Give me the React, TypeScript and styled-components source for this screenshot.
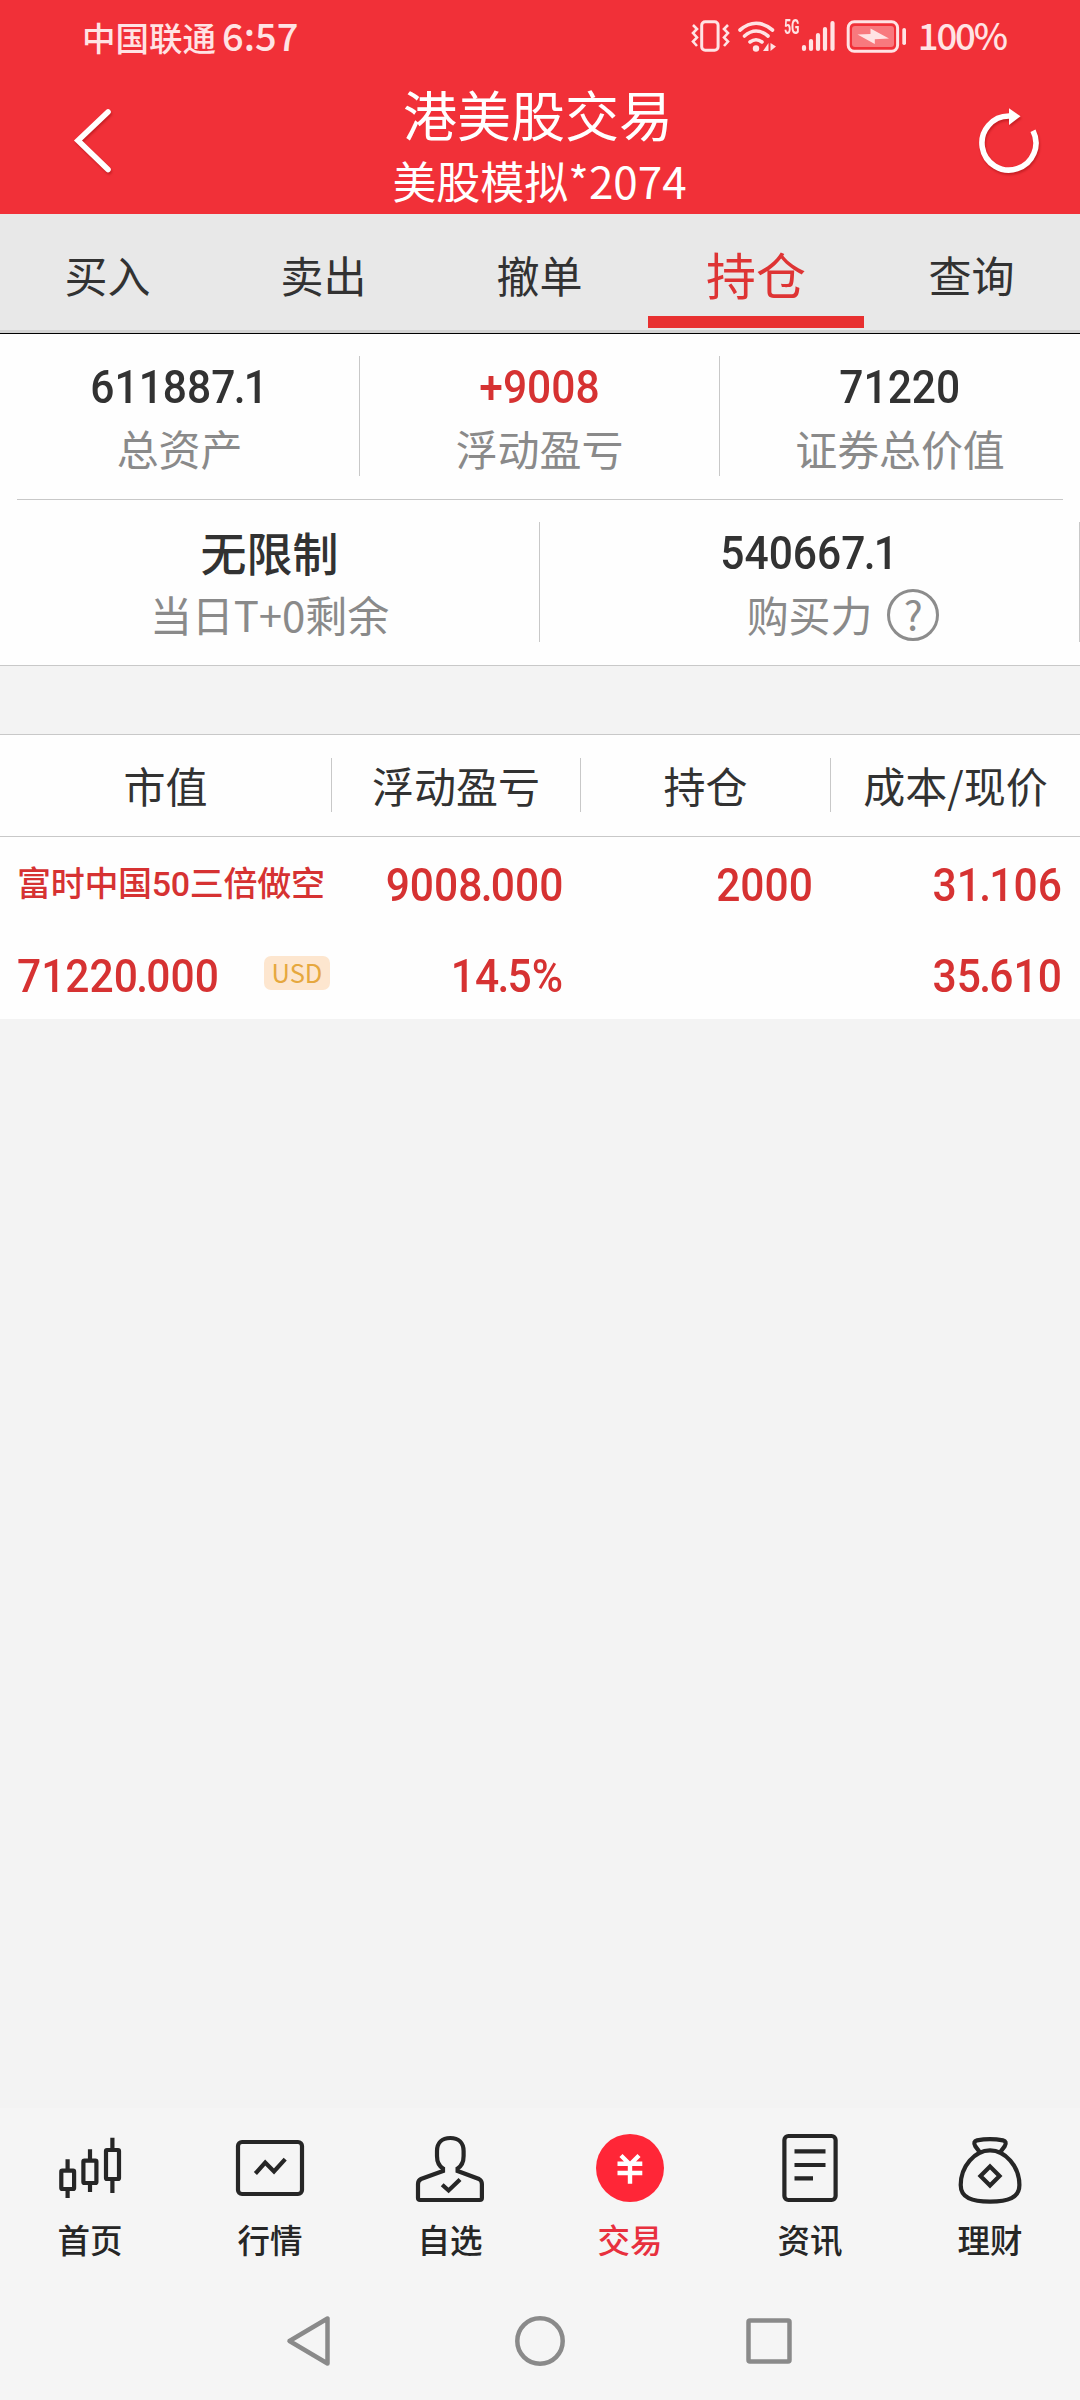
import React from "react";
import styled, { createGlobalStyle } from "styled-components";

const cjk = `"Noto Sans CJK SC", sans-serif`;
const din = `Roboto, "Noto Sans CJK SC", sans-serif`;
const RED = "#d63232";
const INK = "#323232";
const LINE = "#c8c8c8";

const GlobalStyle = createGlobalStyle`
  * { box-sizing: border-box; }
  body { margin: 0; background: #f3f3f3; }
`;

const Screen = styled.div`
  width: 1080px;
  height: 2400px;
  display: flex;
  flex-direction: column;
  background: #f3f3f3;
  font-family: ${cjk};
  color: ${INK};
  white-space: nowrap;
  overflow: hidden;
`;

/* ---------- header ---------- */
const Header = styled.header`
  height: 214px;
  background: #f13038;
  color: #fff;
  display: flex;
  flex-direction: column;
`;

const StatusBar = styled.div`
  height: 74px;
  padding: 0 74px 2px 82px;
  display: flex;
  justify-content: space-between;
  align-items: center;
  color: #ffe3e4;
`;

const StatusLeft = styled.div`
  display: flex;
  align-items: baseline;
  gap: 6px;
  line-height: 50px;
`;

const Carrier = styled.span`
  font-size: 33.5px;
  font-weight: 500;
`;

const Clock = styled.span`
  font-size: 38px;
  font-weight: 500;
`;

const StatusRight = styled.div`
  display: flex;
  align-items: center;
`;

const StatusIcon = styled.svg<{ $gap: number }>`
  display: block;
  height: 36px;
  margin-right: ${(p) => p.$gap}px;
`;

const NetworkType = styled.span`
  width: 16px;
  height: 36px;
  margin-right: 1px;
  font: 700 20px/18px ${din};
  transform: scaleX(0.62);
  transform-origin: left;
`;

const BatteryText = styled.span`
  font-size: 36.5px;
  line-height: 50px;
  padding-bottom: 2px;
  letter-spacing: -2.1px;
  font-weight: 500;
`;

const TitleBar = styled.div`
  height: 140px;
  display: grid;
  grid-template-columns: 140px 1fr 140px;
`;

const Titles = styled.div`
  display: flex;
  flex-direction: column;
  align-items: center;
  padding: 4px 1px 0 0;
`;

const Title = styled.h1`
  margin: 0;
  font-size: 54px;
  font-weight: 400;
  line-height: 72px;
  padding-right: 3px;
`;

const Subtitle = styled.div`
  font-size: 44px;
  line-height: 60px;
`;

const BarIcon = styled.svg`
  display: block;
  width: 140px;
  height: 140px;
  filter: drop-shadow(1px 2px 1px rgba(120, 0, 0, 0.35));
`;

/* ---------- tabs ---------- */
const Tabs = styled.nav`
  height: 120px;
  display: grid;
  grid-template-columns: repeat(5, 1fr);
  background: #e8e8e8;
  border-bottom: 1px solid #000;
  box-shadow: inset 0 -3px 0 #d2d2d2;
`;

const Tab = styled.div<{ $active?: boolean }>`
  height: 114px;
  display: flex;
  justify-content: center;
  align-items: center;
  padding-top: ${(p) => (p.$active ? 16 : 5)}px;
  padding-right: ${(p) => (p.$active ? 0 : 1)}px;
  border-bottom: ${(p) => (p.$active ? "12px solid #e83030" : "0")};
  color: ${(p) => (p.$active ? "#de3434" : INK)};
  font-size: ${(p) => (p.$active ? 50 : 43)}px;
  line-height: 60px;
`;

/* ---------- account figures ---------- */
const Summary = styled.section`
  background: #fefefe;
  border-bottom: 1px solid ${LINE};
`;

const StatRow = styled.div<{ $cols: number }>`
  height: 165px;
  padding: 22px 0 23px;
  display: grid;
  grid-template-columns: repeat(${(p) => p.$cols}, 1fr);
`;

const Rule = styled.div`
  height: 1px;
  margin: 0 17px;
  background: ${LINE};
`;

const Stat = styled.div<{ $divided?: boolean }>`
  height: 120px;
  display: flex;
  flex-direction: column;
  align-items: center;
  border-right: ${(p) => (p.$divided ? `1px solid ${LINE}` : "0")};
`;

const Figure = styled.span<{ $origin: string; $red?: boolean }>`
  display: block;
  font-family: ${din};
  font-size: 47px;
  font-weight: 500;
  line-height: 62px;
  color: ${(p) => (p.$red ? RED : INK)};
  transform: scaleX(0.905);
  transform-origin: ${(p) => p.$origin};
`;

const Point = styled.span`
  margin: 0 -0.04em;
`;

const TextValue = styled.span`
  font-size: 46px;
  font-weight: 500;
  line-height: 58px;
  padding-bottom: 4px;
`;

const Label = styled.span`
  font-size: 42px;
  line-height: 58px;
  padding-top: 1px;
  letter-spacing: -0.1px;
  color: #8a8a8a;
`;

const HelpLabel = styled.div`
  width: 100%;
  display: grid;
  grid-template-columns: 1fr auto 1fr;
  align-items: start;
`;

const Help = styled.span`
  grid-column: 3;
  width: 52px;
  height: 52px;
  margin: 5px 0 0 15px;
  border: 3px solid #8c8c8c;
  border-radius: 50%;
  color: #8c8c8c;
  font-size: 40px;
  line-height: 42px;
  text-align: center;
`;

const HelpText = styled(Label)`
  grid-column: 2;
`;

/* ---------- holdings ---------- */
const Holdings = styled.section`
  margin-top: 68px;
  background: #fefefe;
  border-top: 1px solid ${LINE};
`;

const columns = "332px 249px 250px 249px";

const HeadRow = styled.div`
  height: 102px;
  padding: 23px 0 24px;
  display: grid;
  grid-template-columns: ${columns};
  border-bottom: 1px solid ${LINE};
`;

const HeadCell = styled.div`
  height: 54px;
  font-size: 42px;
  line-height: 54px;
  text-align: center;
  border-right: 1px solid ${LINE};
  &:last-child {
    border-right: 0;
  }
`;

const HoldingRow = styled.div`
  height: 182px;
  padding-top: 4px;
  display: grid;
  grid-template-columns: ${columns};
`;

const HoldingCell = styled.div<{ $first?: boolean }>`
  display: flex;
  flex-direction: column;
  gap: 3px;
  padding: ${(p) => (p.$first ? "0 0 0 17px" : "0 18px 0 0")};
  align-items: ${(p) => (p.$first ? "stretch" : "flex-end")};
`;

const HoldingLine = styled.div`
  height: 88px;
  display: flex;
  align-items: center;
  justify-content: space-between;
`;

const StockName = styled.span`
  font-family: ${din};
  font-size: 34px;
  font-weight: 500;
  line-height: 46px;
  padding-bottom: 3px;
  letter-spacing: -0.3px;
  color: ${RED};
`;

const Currency = styled.span`
  width: 66px;
  height: 34px;
  margin: 0 2px 6px 0;
  border-radius: 7px;
  background: #fde6cf;
  color: #e6a83e;
  font-size: 25.5px;
  line-height: 31px;
  text-align: center;
`;

/* ---------- bottom bars ---------- */
const BottomNav = styled.nav`
  height: 174px;
  margin-top: auto;
  padding-top: 20px;
  display: grid;
  grid-template-columns: repeat(6, 1fr);
  background: #f5f5f5;
`;

const NavItem = styled.div<{ $active?: boolean }>`
  display: flex;
  flex-direction: column;
  align-items: center;
  gap: 11px;
  color: ${(p) => (p.$active ? "#e8303e" : "#262626")};
  font-size: 32.5px;
  line-height: 40px;
  font-weight: 500;
`;

const NavIcon = styled.svg`
  display: block;
  width: 80px;
  height: 80px;
  fill: none;
  stroke: #262626;
  stroke-width: 4.2;
`;

const SystemNav = styled.div`
  height: 118px;
  background: #f5f5f5;
  display: flex;
  justify-content: center;
  align-items: center;
  gap: 169px;
`;

const SystemIcon = styled.svg`
  display: block;
  width: 60px;
  height: 60px;
  fill: none;
  stroke: #8a8a8a;
  stroke-width: 4.5;
  stroke-linejoin: round;
`;

function Num({ value, red, origin = "center" }: { value: string; red?: boolean; origin?: string }) {
  const [whole, fraction] = value.split(".");
  return (
    <Figure $red={red} $origin={origin}>
      {whole}
      {fraction !== undefined && (
        <>
          <Point>.</Point>
          {fraction}
        </>
      )}
    </Figure>
  );
}

const navItems: { label: string; active?: boolean; icon: React.ReactNode }[] = [
  {
    label: "首页",
    icon: (
      <>
        <rect x="11.3" y="42.7" width="12.8" height="18.3" rx="1" />
        <rect x="33.4" y="32.7" width="13" height="22.3" rx="1" />
        <rect x="56" y="22" width="13" height="29" rx="1" />
        <path d="M17.6 31.3V42M17.6 62V70M40 21.3V32M40 56V64M62.4 9.7V21M62.4 52V65" />
      </>
    ),
  },
  {
    label: "行情",
    icon: (
      <>
        <rect x="8" y="14" width="64" height="52" rx="4" />
        <path d="M25.4 45.5L35.2 34.5L44 43.5L55.2 31.2" />
      </>
    ),
  },
  {
    label: "自选",
    icon: (
      <>
        <path d="M33 43V40.5C29 38 27 34 27 28V23C27 15 32 10 40.3 10S53.6 15 53.6 23V28C53.6 34 51.6 38 47.6 40.5V43L69 51Q71.9 52.5 71.9 56V70Q71.9 72 69.9 72H10Q8 72 8 70V56Q8 52.5 11 51Z" />
        <path d="M32.2 56.7L38.6 62.5L50 51.5" />
      </>
    ),
  },
  {
    label: "交易",
    active: true,
    icon: (
      <>
        <circle cx="40" cy="40" r="34" fill="#ff2637" stroke="none" />
        <path d="M31 27.5L40 36.5L49 27.5M27.5 35.7H52.3M27.5 45H52.3M40 36V55.7" stroke="#fff" strokeWidth="4.4" />
      </>
    ),
  },
  {
    label: "资讯",
    icon: (
      <>
        <rect x="14.4" y="8" width="51.2" height="64" rx="4" />
        <path d="M24.5 23.3H55.5M24.5 37H55.5M24.5 50.3H43" />
      </>
    ),
  },
  {
    label: "理财",
    icon: (
      <>
        <path d="M40 22.3C25 22.3 10.7 38 10.7 57C10.7 70 22 73.7 40 73.7S69.4 70 69.4 57C69.4 38 55 22.3 40 22.3Z" />
        <path d="M30 24.5L25.2 18C23.5 15 24.3 13 27 12.4C35 10.9 45 10.9 53 12.4C55.7 13 56.5 15 54.8 18L50 24.5" />
        <path d="M40 38.5L49.5 48L40 57.5L30.5 48Z" />
      </>
    ),
  },
];

export default function App() {
  return (
    <Screen>
      <GlobalStyle />
      <Header>
        <StatusBar>
          <StatusLeft>
            <Carrier>中国联通</Carrier>
            <Clock>6:57</Clock>
          </StatusLeft>
          <StatusRight>
            <StatusIcon $gap={8} width="39" viewBox="692 18 39 36" fill="none" stroke="currentColor" strokeWidth="3">
              <rect x="702.7" y="21.8" width="16.4" height="28.4" rx="3.5" />
              <path d="M694 25L698 29L694 33L698 37.5L694 41.5L698 46M729 25L725 29L729 33L725 37.5L729 41.5L725 46" strokeWidth="2.6" />
            </StatusIcon>
            <StatusIcon $gap={8} width="38" viewBox="739 18 38 36" fill="none" stroke="currentColor" strokeWidth="3.6">
              <path d="M741 30Q757 16.5 773.5 30M745.5 36Q757 26 769 36M751 42Q757 37.5 763 42" strokeLinecap="round" />
              <circle cx="757" cy="48.5" r="3.2" fill="currentColor" stroke="none" />
              <path d="M769.5 43V51H764ZM771.5 51V43L777 46.5Z" fill="currentColor" stroke="none" />
            </StatusIcon>
            <NetworkType>5G</NetworkType>
            <StatusIcon $gap={11} width="34" viewBox="801 18 34 36" fill="none" stroke="currentColor" strokeWidth="4.2" strokeLinecap="round">
              <path d="M804 47V49M811 41V49M818 35V49M825 29V49M832.5 23V49" />
            </StatusIcon>
            <StatusIcon $gap={11} width="61" viewBox="846 18 61 36">
              <rect x="848.2" y="21.8" width="49.4" height="29.4" rx="6" fill="none" stroke="currentColor" strokeWidth="3" />
              <rect x="852" y="26" width="42" height="21" rx="3" fill="#f8797e" />
              <rect x="902.3" y="28" width="3.7" height="17" rx="1.8" fill="currentColor" />
              <path d="M857.5 34.5L870.5 34V28.5L889 38.5L874.8 39.3V44Z" fill="currentColor" />
            </StatusIcon>
            <BatteryText>100%</BatteryText>
          </StatusRight>
        </StatusBar>
        <TitleBar>
          <BarIcon viewBox="0 74 140 140" fill="none" stroke="#fff" strokeWidth="5.6" strokeLinecap="round">
            <path d="M108 112L78 140.5L108 169.5" />
          </BarIcon>
          <Titles>
            <Title>港美股交易</Title>
            <Subtitle>美股模拟*2074</Subtitle>
          </Titles>
          <BarIcon viewBox="940 74 140 140" fill="none" stroke="#fff" strokeWidth="5.6">
            <path d="M1009 116A27 27 0 1 0 1033 130.7" />
            <path d="M1009 108.3L1020.5 116.3L1009 125Z" fill="#fff" stroke="none" />
          </BarIcon>
        </TitleBar>
      </Header>

      <Tabs>
        <Tab>买入</Tab>
        <Tab>卖出</Tab>
        <Tab>撤单</Tab>
        <Tab $active>持仓</Tab>
        <Tab>查询</Tab>
      </Tabs>

      <Summary>
        <StatRow $cols={3}>
          <Stat $divided>
            <Num value="611887.1" />
            <Label>总资产</Label>
          </Stat>
          <Stat $divided>
            <Num value="+9008" red />
            <Label>浮动盈亏</Label>
          </Stat>
          <Stat>
            <Num value="71220" />
            <Label>证券总价值</Label>
          </Stat>
        </StatRow>
        <Rule />
        <StatRow $cols={2}>
          <Stat $divided>
            <TextValue>无限制</TextValue>
            <Label>当日T+0剩余</Label>
          </Stat>
          <Stat $divided>
            <Num value="540667.1" />
            <HelpLabel>
              <HelpText>购买力</HelpText>
              <Help>?</Help>
            </HelpLabel>
          </Stat>
        </StatRow>
      </Summary>

      <Holdings>
        <HeadRow>
          <HeadCell>市值</HeadCell>
          <HeadCell>浮动盈亏</HeadCell>
          <HeadCell>持仓</HeadCell>
          <HeadCell>成本/现价</HeadCell>
        </HeadRow>
        <HoldingRow>
          <HoldingCell $first>
            <HoldingLine>
              <StockName>富时中国50三倍做空</StockName>
            </HoldingLine>
            <HoldingLine>
              <Num value="71220.000" red origin="left" />
              <Currency>USD</Currency>
            </HoldingLine>
          </HoldingCell>
          <HoldingCell>
            <HoldingLine>
              <Num value="9008.000" red origin="right" />
            </HoldingLine>
            <HoldingLine>
              <Num value="14.5%" red origin="right" />
            </HoldingLine>
          </HoldingCell>
          <HoldingCell>
            <HoldingLine>
              <Num value="2000" red origin="right" />
            </HoldingLine>
          </HoldingCell>
          <HoldingCell>
            <HoldingLine>
              <Num value="31.106" red origin="right" />
            </HoldingLine>
            <HoldingLine>
              <Num value="35.610" red origin="right" />
            </HoldingLine>
          </HoldingCell>
        </HoldingRow>
      </Holdings>

      <BottomNav>
        {navItems.map((item) => (
          <NavItem key={item.label} $active={item.active}>
            <NavIcon viewBox="0 0 80 80">{item.icon}</NavIcon>
            {item.label}
          </NavItem>
        ))}
      </BottomNav>
      <SystemNav>
        <SystemIcon viewBox="0 0 60 60">
          <path d="M8.5 30L46.5 7.5V52.5Z" />
        </SystemIcon>
        <SystemIcon viewBox="0 0 60 60">
          <circle cx="30" cy="30" r="22.7" />
        </SystemIcon>
        <SystemIcon viewBox="0 0 60 60">
          <rect x="9.5" y="9.5" width="41" height="41" rx="1.5" />
        </SystemIcon>
      </SystemNav>
    </Screen>
  );
}
